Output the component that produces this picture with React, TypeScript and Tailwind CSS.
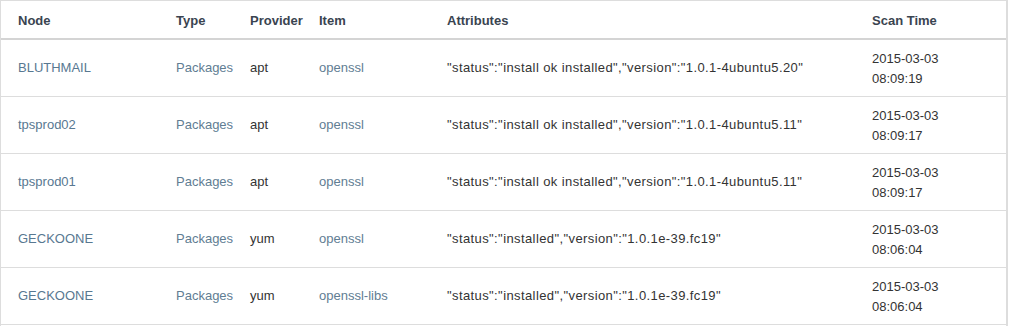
import React from 'react';

const rows = [
  { node: 'BLUTHMAIL', provider: 'apt', item: 'openssl', status: 'install ok installed', version: '1.0.1-4ubuntu5.20', date: '2015-03-03', time: '08:09:19' },
  { node: 'tpsprod02', provider: 'apt', item: 'openssl', status: 'install ok installed', version: '1.0.1-4ubuntu5.11', date: '2015-03-03', time: '08:09:17' },
  { node: 'tpsprod01', provider: 'apt', item: 'openssl', status: 'install ok installed', version: '1.0.1-4ubuntu5.11', date: '2015-03-03', time: '08:09:17' },
  { node: 'GECKOONE', provider: 'yum', item: 'openssl', status: 'installed', version: '1.0.1e-39.fc19', date: '2015-03-03', time: '08:06:04' },
  { node: 'GECKOONE', provider: 'yum', item: 'openssl-libs', status: 'installed', version: '1.0.1e-39.fc19', date: '2015-03-03', time: '08:06:04' },
];

const cols = 'grid grid-cols-[158px_74px_69px_128px_425px_1fr] pl-[17px]';

export default function App() {
  return (
    <div className="w-[1008px] h-[326px] bg-white border-l border-t border-r-2 border-[#dddddd] text-[13px] text-[#333333]" style={{ fontFamily: '"Liberation Sans", Arial, sans-serif' }}>
      <div className={`${cols} h-[39px] pt-[2px] items-center border-b-2 border-[#d4d4d4] font-bold text-[#3a4450]`}>
        <div>Node</div>
        <div>Type</div>
        <div>Provider</div>
        <div>Item</div>
        <div>Attributes</div>
        <div>Scan Time</div>
      </div>
      {rows.map((r, i) => (
        <div key={i} className={`${cols} h-[57px] items-center border-b border-[#dddddd] leading-[20px]`}>
          <div className="text-[#587891]">{r.node}</div>
          <div className="text-[#617d93]">Packages</div>
          <div>{r.provider}</div>
          <div className="text-[#617d93]">{r.item}</div>
          <div className="tracking-[0.4px]">"status":"{r.status}","version":"{r.version}"</div>
          <div className="pt-px">
            <div>{r.date}</div>
            <div>{r.time}</div>
          </div>
        </div>
      ))}
    </div>
  );
}
